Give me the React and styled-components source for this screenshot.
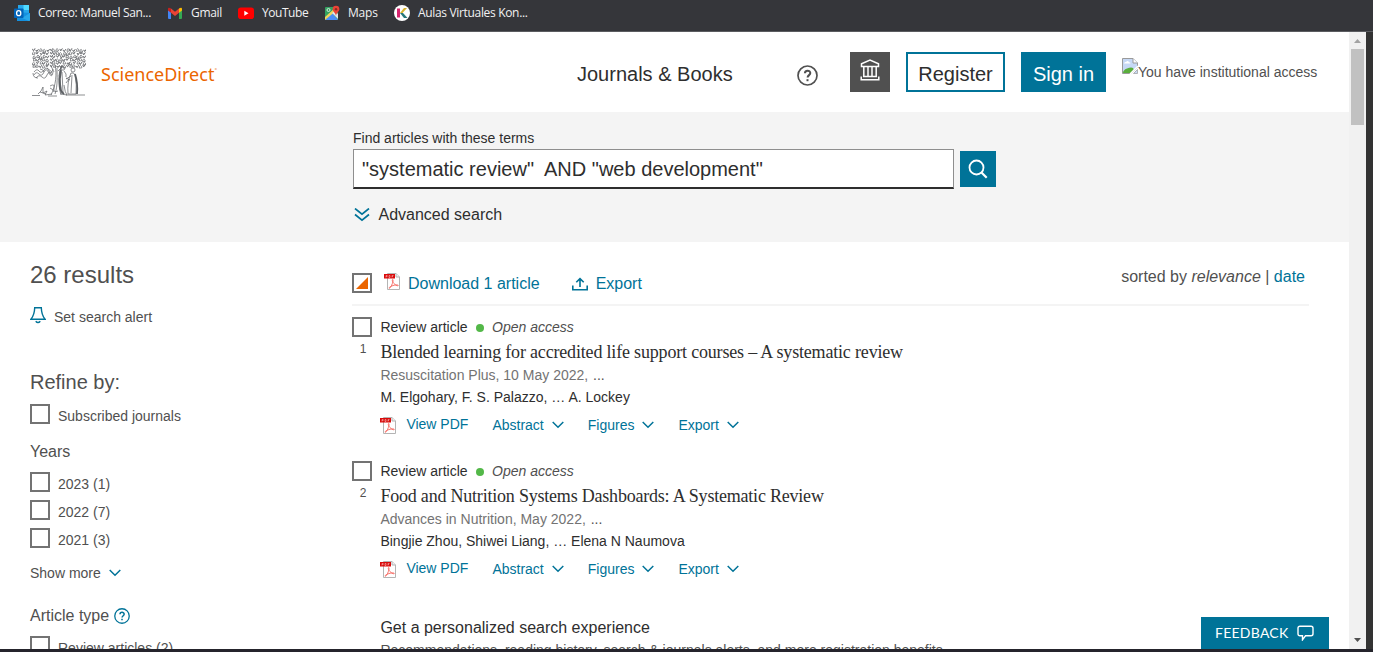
import React from "react";
import styled, { createGlobalStyle } from "styled-components";

const teal = "#007398";
const ink = "#2e2e2e";
const grey = "#505050";

const GlobalStyle = createGlobalStyle`
  * { box-sizing: border-box; }
  body { margin: 0; background: #fff; overflow: hidden; }
  svg { display: block; flex: none; }
`;

const Screen = styled.div`
  width: 1373px;
  height: 652px;
  display: flex;
  flex-direction: column;
  overflow: hidden;
  font-family: "Liberation Sans", Arial, sans-serif;
  font-size: 14px;
  line-height: 20px;
  color: ${ink};
  white-space: nowrap;
`;

const BookmarkBar = styled.nav`
  height: 32px;
  flex: none;
  display: flex;
  align-items: flex-start;
  padding: 5px 0 0 14px;
  background: #35363a;
  border-bottom: 1px solid #5b5c60;
`;

const Bookmark = styled.div`
  width: ${(p) => p.$width}px;
  display: flex;
  align-items: center;
  gap: 8px;
  height: 16px;
  font: 12px/16px "Open Sans", "Noto Sans", sans-serif;
  letter-spacing: ${(p) => p.$spacing || 0}px;
  color: #f1f1f2;
`;

const Window = styled.div`
  flex: 1;
  min-height: 0;
  display: flex;
  background: #333;
  border-bottom: 3px solid #25242c;
`;

const Page = styled.div`
  width: 1349px;
  height: 617px;
  overflow: hidden;
  position: relative;
  background: #fff;
`;

const Scrollbar = styled.div`
  width: 17px;
  height: 617px;
  display: flex;
  flex-direction: column;
  align-items: center;
  justify-content: space-between;
  background: #f1f1f1;
`;

const ScrollTop = styled.div`
  display: flex;
  flex-direction: column;
  align-items: center;
`;

const Thumb = styled.div`
  width: 13px;
  height: 76px;
  background: #c1c1c1;
`;

const Header = styled.header`
  height: 80px;
  display: flex;
  align-items: flex-start;
  padding: 16px 32px 0;
`;

const Wordmark = styled.div`
  width: 491px;
  flex: none;
  padding: 14px 0 0 15px;
  font: 18px/24px "Noto Sans", "Open Sans", sans-serif;
  letter-spacing: 0;
  color: #eb6500;
  sup { font-size: 6px; line-height: 0; vertical-align: 9px; }
`;

const NavLink = styled.a`
  width: 220px;
  flex: none;
  padding-top: 14px;
  font-size: 20px;
  line-height: 24px;
`;

const HelpSlot = styled.div`
  width: 53px;
  flex: none;
  padding-top: 17px;
`;

const InstitutionButton = styled.button`
  width: 40px;
  height: 40px;
  flex: none;
  display: flex;
  align-items: flex-start;
  margin: 4px 16px 0 0;
  padding: 7px 10px;
  border: 0;
  background: ${grey};
`;

const HeaderButton = styled.button`
  width: ${(p) => p.$width}px;
  height: 40px;
  flex: none;
  margin: 4px 16px 0 0;
  padding: 4px 0 0;
  border: 2px solid ${teal};
  background: ${(p) => (p.$filled ? teal : "#fff")};
  color: ${(p) => (p.$filled ? "#fff" : ink)};
  font: 20px/24px "Liberation Sans", Arial, sans-serif;
`;

const Access = styled.div`
  display: flex;
  padding-top: 10px;
  color: ${grey};
  span { padding-top: 4px; }
`;

const SearchBand = styled.section`
  height: 130px;
  padding: 16px 0 0 353px;
  background: #f4f4f4;
`;

const SearchRow = styled.div`
  display: flex;
  align-items: center;
  gap: 6px;
  margin-top: 1px;
`;

const SearchField = styled.div`
  width: 601px;
  height: 40px;
  padding: 7px 8px;
  border: 1px solid #8e8e8e;
  border-bottom: 2px solid ${ink};
  background: #fff;
  font-size: 20px;
  line-height: 24px;
  white-space: pre;
`;

const SearchButton = styled.button`
  width: 36px;
  height: 36px;
  padding: 8px;
  border: 0;
  background: ${teal};
`;

const AdvancedLink = styled.a`
  display: flex;
  align-items: center;
  gap: 8.5px;
  margin: 16px 0 0 1px;
  font-size: 16px;
`;

const Columns = styled.main`
  display: flex;
  padding-left: 30px;
`;

const Sidebar = styled.aside`
  width: 322px;
  padding-top: 19px;
  color: ${grey};
`;

const ResultCount = styled.h1`
  margin: 0;
  font-size: 24px;
  line-height: 28px;
  font-weight: 400;
`;

const AlertLink = styled.a`
  display: flex;
  gap: 8px;
  margin-top: 18px;
`;

const RefineTitle = styled.h2`
  margin: 43px 0 10px;
  font-size: 20px;
  line-height: 24px;
  font-weight: 400;
`;

const FacetTitle = styled.h3`
  display: flex;
  align-items: center;
  gap: 5px;
  margin: ${(p) => p.$top}px 0 10px;
  font-size: 16px;
  line-height: 20px;
  font-weight: 400;
`;

const FacetRow = styled.label`
  display: flex;
  gap: 8px;
  height: 28px;
  span { padding-top: 2px; }
`;

const Checkbox = styled.i`
  display: block;
  flex: none;
  width: 20px;
  height: 20px;
  border: 2px solid #737373;
  background: #fff;
`;

const PartialCheckbox = styled(Checkbox)`
  padding: 2px;
  &::before {
    content: "";
    display: block;
    width: 12px;
    height: 12px;
    background: #eb6500;
    clip-path: polygon(100% 0, 100% 100%, 0 100%);
  }
`;

const ShowMore = styled.a`
  display: flex;
  align-items: center;
  gap: 8px;
  margin-top: 7px;
`;

const Results = styled.section`
  width: 957px;
  padding-top: 31px;
`;

const Toolbar = styled.div`
  height: 33px;
  display: flex;
  align-items: flex-start;
  margin-bottom: 11px;
  border-bottom: 2px solid #f4f4f4;
  font-size: 16px;
  color: ${teal};
`;

const ToolLink = styled.a`
  display: flex;
  gap: 8px;
  margin-left: ${(p) => p.$left}px;
  span { padding-top: 1px; }
`;

const SortLine = styled.div`
  margin: -6px 4px 0 auto;
  color: ${grey};
  a { color: ${teal}; }
`;

const Item = styled.article`
  height: 144px;
  display: flex;
`;

const ItemMark = styled.div`
  width: 28.4px;
  flex: none;
`;

const ItemNumber = styled.div`
  width: 22px;
  margin-top: 4px;
  text-align: center;
  font-size: 12px;
  line-height: 16px;
  color: ${grey};
`;

const KindRow = styled.div`
  display: flex;
  align-items: center;
  em { color: ${grey}; }
`;

const AccessDot = styled.i`
  width: 8px;
  height: 8px;
  margin: 2px 8.5px 0 8px;
  border-radius: 50%;
  background: #53b848;
`;

const ItemTitle = styled.h2`
  margin: 3px 0 1px;
  font: 400 18px/24px "Liberation Serif", Georgia, serif;
  letter-spacing: ${(p) => p.$spacing}px;
`;

const Source = styled.div`
  color: #737373;
  span { margin-left: 1px; color: ${grey}; }
`;

const Authors = styled.div`
  margin-top: 2px;
`;

const Actions = styled.div`
  display: flex;
  margin-top: 7px;
  color: ${teal};
`;

const PdfLink = styled.a`
  width: 112px;
  display: flex;
  gap: 10px;
`;

const IconDrop = styled.span`
  padding-top: 3px;
`;

const ActionLink = styled.a`
  display: flex;
  align-items: center;
  gap: 8px;
  margin-right: 24px;
  padding-top: 1px;
`;

const Promo = styled.div`
  margin: 13px 0 0 28.4px;
  h3 { margin: 0 0 2px; font-size: 16px; line-height: 20px; font-weight: 400; }
  p { margin: 0; color: ${grey}; }
`;

const Feedback = styled.button`
  position: absolute;
  right: 20px;
  bottom: 0;
  width: 128px;
  height: 32px;
  display: flex;
  align-items: center;
  gap: 8px;
  padding: 0 0 0 14px;
  border: 0;
  background: ${teal};
  color: #fff;
  font: 14px/20px Lato, sans-serif;
  letter-spacing: 0.25px;
`;

function Chevron() {
  return (
    <svg width="12" height="8" viewBox="0 0 12 8" fill="none" stroke={teal} strokeWidth="1.5">
      <path d="M.7 1 6 6.3 11.3 1" />
    </svg>
  );
}

function PdfIcon() {
  return (
    <svg width="16" height="18" viewBox="0 0 16 18">
      <path d="M3.5 .5H12l3.500 3.500v12.500h-12z" fill="#fff" stroke="#b4b4b4" />
      <path d="M12 .5v3.500h3.500" fill="#eee" stroke="#b4b4b4" />
      <path d="M0 1h11v4.500H0z" fill="#d90b0b" />
      <path d="M2 4.500V2.500h1.200v1H2M5 2.500v2h1v-2zM8 4.500V2.500h1.500M8 3.500h1" fill="none" stroke="#f7b5b5" strokeWidth=".6" />
      <path d="M8.600 6.500c-1.200 1 1.200 5 4.500 6.200 1.800.5 1.500-.9-.4-.8-3.200.1-7.400 1.800-7.600 3-.1 1.300 1.700-.2 3.200-4.200.9-2.500 1-4.200.3-4.200z" fill="none" stroke="#f5655e" strokeWidth=".9" />
    </svg>
  );
}

function HelpIcon({ size, color }) {
  return (
    <svg width={size} height={size} viewBox="0 0 21 21" fill="none" stroke={color} strokeWidth="1.700">
      <circle cx="10.500" cy="10.500" r="9.500" />
      <path d="M7.900 8.300c0-3.400 5.400-3.400 5.400-.2 0 2-2.700 2.100-2.700 4.500" strokeWidth="2" />
      <path d="M9.500 14.200h2v2h-2z" fill={color} stroke="none" />
    </svg>
  );
}

/* Engraved elm: foliage is built from small leaf curls on a jittered grid. */
const leaves = [];
for (let row = 0; row < 6; row++) {
  for (let col = 0; col < 16; col++) {
    const n = (row * 31 + col * 17 + row * col * 7) % 11;
    const x = 0.5 + col * 3.35 + (n % 3) * 0.5;
    const y = 0.2 + row * 3.2 + (n % 4) * 0.4;
    const s = n % 2 ? 1 : -1;
    leaves.push(`M${x} ${y + 1}q${1.2} ${-2 * s} 2.200 0t-1 1.600q-2 ${s} -1-1.600`);
  }
}

function TreeLogo() {
  return (
    <svg width="54" height="49" viewBox="0 0 54 49" fill="none" stroke="#5b5f63" strokeWidth=".7">
      <path d={leaves.join("")} />
      <path d="M2 24q3-4 5-1t5-1 5 1 4-2M2 27q2-4 5-1t5-2 5 1 4-1M4 30q3-4 6-1t5-2 5 0M1 25q0 5 5 5M8 21q3 0 4 3M19 18l3 6M31 18l-5 5M15 20l5 4" />
      <path d="M23 17c2 9 1 20-4 30M30 17c-4 7-4 20-1 30M25 20c0 8 1 17-2 26" />
      <path d="M29 20q-3 8-1 14t1 12l6 1q-2-2-3-10M32 23q3 3 2 6M30 24l1 20M37 31l-3 4" />
      <path d="M29 22q-2 9-1 17 0 4 4 7" strokeWidth="2" />
      <circle cx="31" cy="20.500" r="1.700" />
      <circle cx="41" cy="22" r="2" />
      <path d="M39 25q-4 9-3 21h8q1-9-1-19-1-3-4-2zM39 28l-5 3M38 32l-4-2M40 27l-1 18" />
      <path d="M43 26q3 9 2 20" strokeWidth="1.800" />
      <path d="M18 38q5-3 4 2t4 3M18 40q3 1 4 4" />
      <path d="M0 47.500h8M6 46l3-3 2-4 0 6 4-2-2 4M13 47l7-1M16 48h9M34 47h19M8 44l6 2" />
    </svg>
  );
}

function OutlookIcon() {
  return (
    <svg width="16" height="16" viewBox="0 0 16 16">
      <path d="M4 0h11v9H4z" fill="#28a8ea" />
      <path d="M9.500 0H15v5H9.500z" fill="#50d9ff" />
      <path d="M3 7l13 1v7a1 1 0 0 1-1 1H3z" fill="#1490df" />
      <path d="M16 8l-8 5 7 3q1 0 1-1z" fill="#28a8ea" />
      <rect y="3.500" width="9.500" height="9.500" rx=".8" fill="#0364b8" />
      <ellipse cx="4.700" cy="8.200" rx="2.100" ry="2.500" fill="none" stroke="#fff" strokeWidth="1.300" />
    </svg>
  );
}

function GmailIcon() {
  return (
    <svg width="16" height="16" viewBox="0 0 16 16">
      <path d="M1 4l3 2.500V14H2q-1 0-1-1z" fill="#4285f4" />
      <path d="M12 6.500L15 4v9q0 1-1 1h-2z" fill="#34a853" />
      <path d="M4 3.500l4 3.200 4-3.200v4.200L8 11 4 7.700z" fill="#ea4335" />
      <path d="M1 4q0-2 2-1l1 .6v4.200L1 5.500z" fill="#c5221f" />
      <path d="M15 4q0-2-2-1l-1 .6v4.200l3-2.300z" fill="#fbbc04" />
    </svg>
  );
}

function YouTubeIcon() {
  return (
    <svg width="16" height="16" viewBox="0 0 16 16">
      <rect y="2.500" width="16" height="11.500" rx="2.800" fill="#f00" />
      <path d="M6.300 5.700v5l4.200-2.500z" fill="#fff" />
    </svg>
  );
}

function MapsIcon() {
  return (
    <svg width="16" height="16" viewBox="0 0 16 16">
      <rect x="1" y="2" width="13" height="13" rx="1" fill="#34a261" />
      <path d="M1 15l7-7 6 7z" fill="#4c8df5" />
      <path d="M1 12l10-9 2 2-12 10z" fill="#f2d45c" />
      <path d="M8 8l6 6V9l-3-3z" fill="#dfe5ec" />
      <circle cx="4.500" cy="5" r="1.500" fill="none" stroke="#d9eadf" />
      <path d="M12 .8a3.400 3.400 0 0 1 3.400 3.400C15.400 6.500 12 8 12 11c0-3-3.400-4.500-3.400-6.800A3.400 3.400 0 0 1 12 .8z" fill="#ea4335" />
      <circle cx="12" cy="4.200" r="1.200" fill="#8c2b22" />
    </svg>
  );
}

function KonradIcon() {
  return (
    <svg width="16" height="16" viewBox="0 0 16 16">
      <circle cx="8" cy="8" r="8" fill="#fff" />
      <path d="M3 3.500h3v9H3z" fill="#d6246e" />
      <path d="M6 8l4-5h3L8.500 8z" fill="#d8b42d" />
      <path d="M6 8h3l4.500 5H10z" fill="#27777a" />
    </svg>
  );
}

function BrokenImage() {
  return (
    <svg width="16" height="16" viewBox="0 0 16 16">
      <path d="M.5.500H11L15.500 5v4L9 15.500H.5z" fill="#c6d8f5" stroke="#9a9a9a" />
      <path d="M11 .5V5h4.500" fill="#fff" stroke="#9a9a9a" />
      <path d="M2 5.500q.5-2 2-1.500 2-2 3 .3 1.500 0 1.500 1.200z" fill="#fff" />
      <path d="M1 15q0-3 4-4.500T11 10l1 2-3 3z" fill="#5aae3c" />
      <path d="M8 16l8-8" fill="none" stroke="#fff" strokeWidth="1.500" />
      <path d="M15.500 11.500v4h-4z" fill="#c6d8f5" stroke="#9a9a9a" strokeWidth=".7" />
    </svg>
  );
}

const articles = [
  {
    title: "Blended learning for accredited life support courses – A systematic review",
    spacing: -0.18,
    source: "Resuscitation Plus, 10 May 2022,",
    authors: "M. Elgohary, F. S. Palazzo, … A. Lockey",
  },
  {
    title: "Food and Nutrition Systems Dashboards: A Systematic Review",
    spacing: -0.21,
    source: "Advances in Nutrition, May 2022,",
    authors: "Bingjie Zhou, Shiwei Liang, … Elena N Naumova",
  },
];

function Article({ number, article }) {
  return (
    <Item>
      <ItemMark>
        <Checkbox />
        <ItemNumber>{number}</ItemNumber>
      </ItemMark>
      <div>
        <KindRow>
          <span>Review article</span>
          <AccessDot />
          <em>Open access</em>
        </KindRow>
        <ItemTitle $spacing={article.spacing}>{article.title}</ItemTitle>
        <Source>
          {article.source} <span>...</span>
        </Source>
        <Authors>{article.authors}</Authors>
        <Actions>
          <PdfLink>
            <IconDrop><PdfIcon /></IconDrop>
            <span>View PDF</span>
          </PdfLink>
          {["Abstract", "Figures", "Export"].map((label) => (
            <ActionLink key={label}>{label}<Chevron /></ActionLink>
          ))}
        </Actions>
      </div>
    </Item>
  );
}

function Facet({ children }) {
  return <FacetRow><Checkbox /><span>{children}</span></FacetRow>;
}

export default function App() {
  return (
    <Screen>
      <GlobalStyle />
      <BookmarkBar>
        <Bookmark $width={153} $spacing={-0.33}><OutlookIcon />Correo: Manuel San...</Bookmark>
        <Bookmark $width={71} $spacing={-0.3}><GmailIcon />Gmail</Bookmark>
        <Bookmark $width={86} $spacing={-0.45}><YouTubeIcon />YouTube</Bookmark>
        <Bookmark $width={70} $spacing={-0.2}><MapsIcon />Maps</Bookmark>
        <Bookmark $width={150} $spacing={-0.33}><KonradIcon />Aulas Virtuales Kon...</Bookmark>
      </BookmarkBar>
      <Window>
        <Page>
          <Header>
            <TreeLogo />
            <Wordmark>ScienceDirect<sup>°</sup></Wordmark>
            <NavLink>Journals &amp; Books</NavLink>
            <HelpSlot><HelpIcon size={21} color={grey} /></HelpSlot>
            <InstitutionButton>
              <svg width="20" height="22" viewBox="0 0 20 22" fill="none" stroke="#fff" strokeWidth="1.500">
                <path d="M1.500 7.500V4.800L10 1l8.500 3.800v2.700zM3.800 7.500v10M8 7.500v10M12 7.500v10M16.200 7.500v10M3 17.500h14M1.200 17.500v3.300h17.600v-3.300" />
              </svg>
            </InstitutionButton>
            <HeaderButton $width={99}>Register</HeaderButton>
            <HeaderButton $width={85} $filled>Sign in</HeaderButton>
            <Access><BrokenImage /><span>You have institutional access</span></Access>
          </Header>
          <SearchBand>
            <div>Find articles with these terms</div>
            <SearchRow>
              <SearchField>{'"systematic review"  AND "web development"'}</SearchField>
              <SearchButton>
                <svg width="20" height="20" viewBox="0 0 20 20" fill="none" stroke="#fff" strokeWidth="1.800">
                  <circle cx="8.500" cy="8.500" r="7" />
                  <path d="M13.500 13.500l5.200 5.200" strokeWidth="2.200" />
                </svg>
              </SearchButton>
            </SearchRow>
            <AdvancedLink>
              <svg width="16" height="14" viewBox="0 0 16 14" fill="none" stroke={teal} strokeWidth="1.700">
                <path d="M1 .5l7 5.700L15 .5M1 6.500l7 5.700 7-5.700" />
              </svg>
              Advanced search
            </AdvancedLink>
          </SearchBand>
          <Columns>
            <Sidebar>
              <ResultCount>26 results</ResultCount>
              <AlertLink>
                <svg width="16" height="17" viewBox="0 0 16 17" fill="none" stroke={teal} strokeWidth="1.400">
                  <path d="M4 .8h8M4.700 .8Q4.500 8 .9 12.300h14.200Q11.500 8 11.300 .8M5.700 14.200Q8 16.800 10.300 14.200" />
                </svg>
                Set search alert
              </AlertLink>
              <RefineTitle>Refine by:</RefineTitle>
              <Facet>Subscribed journals</Facet>
              <FacetTitle $top={10}>Years</FacetTitle>
              <Facet>2023 (1)</Facet>
              <Facet>2022 (7)</Facet>
              <Facet>2021 (3)</Facet>
              <ShowMore>Show more<Chevron /></ShowMore>
              <FacetTitle $top={23}>Article type<HelpIcon size={16} color={teal} /></FacetTitle>
              <Facet>Review articles (2)</Facet>
            </Sidebar>
            <Results>
              <Toolbar>
                <PartialCheckbox />
                <ToolLink $left={12}><PdfIcon /><span>Download 1 article</span></ToolLink>
                <ToolLink $left={32}>
                  <svg width="16" height="18" viewBox="0 0 16 18" fill="none" stroke={teal} strokeWidth="1.600">
                    <path d="M.8 12.500v4.300h14.400v-4.300M8 14V5.800M4.300 9.300 8 5.600 11.700 9.300" />
                  </svg>
                  <span>Export</span>
                </ToolLink>
                <SortLine>sorted by <em>relevance</em> | <a>date</a></SortLine>
              </Toolbar>
              {articles.map((article, i) => (
                <Article key={article.title} number={i + 1} article={article} />
              ))}
              <Promo>
                <h3>Get a personalized search experience</h3>
                <p>Recommendations, reading history, search &amp; journals alerts, and more registration benefits.</p>
              </Promo>
            </Results>
          </Columns>
          <Feedback>
            FEEDBACK
            <svg width="17" height="16" viewBox="0 0 17 16" fill="none" stroke="#fff" strokeWidth="1.400">
              <path d="M3 1.200h11q2 0 2 2v5.600q0 2-2 2H8.500L5.500 14.800v-4H3q-2 0-2-2V3.200q0-2 2-2z" />
            </svg>
          </Feedback>
        </Page>
        <Scrollbar>
          <ScrollTop>
            <svg width="17" height="17" viewBox="0 0 17 17"><path d="M5 11h7L8.500 7z" fill="#a3a3a3" /></svg>
            <Thumb />
          </ScrollTop>
          <svg width="17" height="17" viewBox="0 0 17 17"><path d="M5 6h7l-3.500 4z" fill="#505050" /></svg>
        </Scrollbar>
      </Window>
    </Screen>
  );
}
